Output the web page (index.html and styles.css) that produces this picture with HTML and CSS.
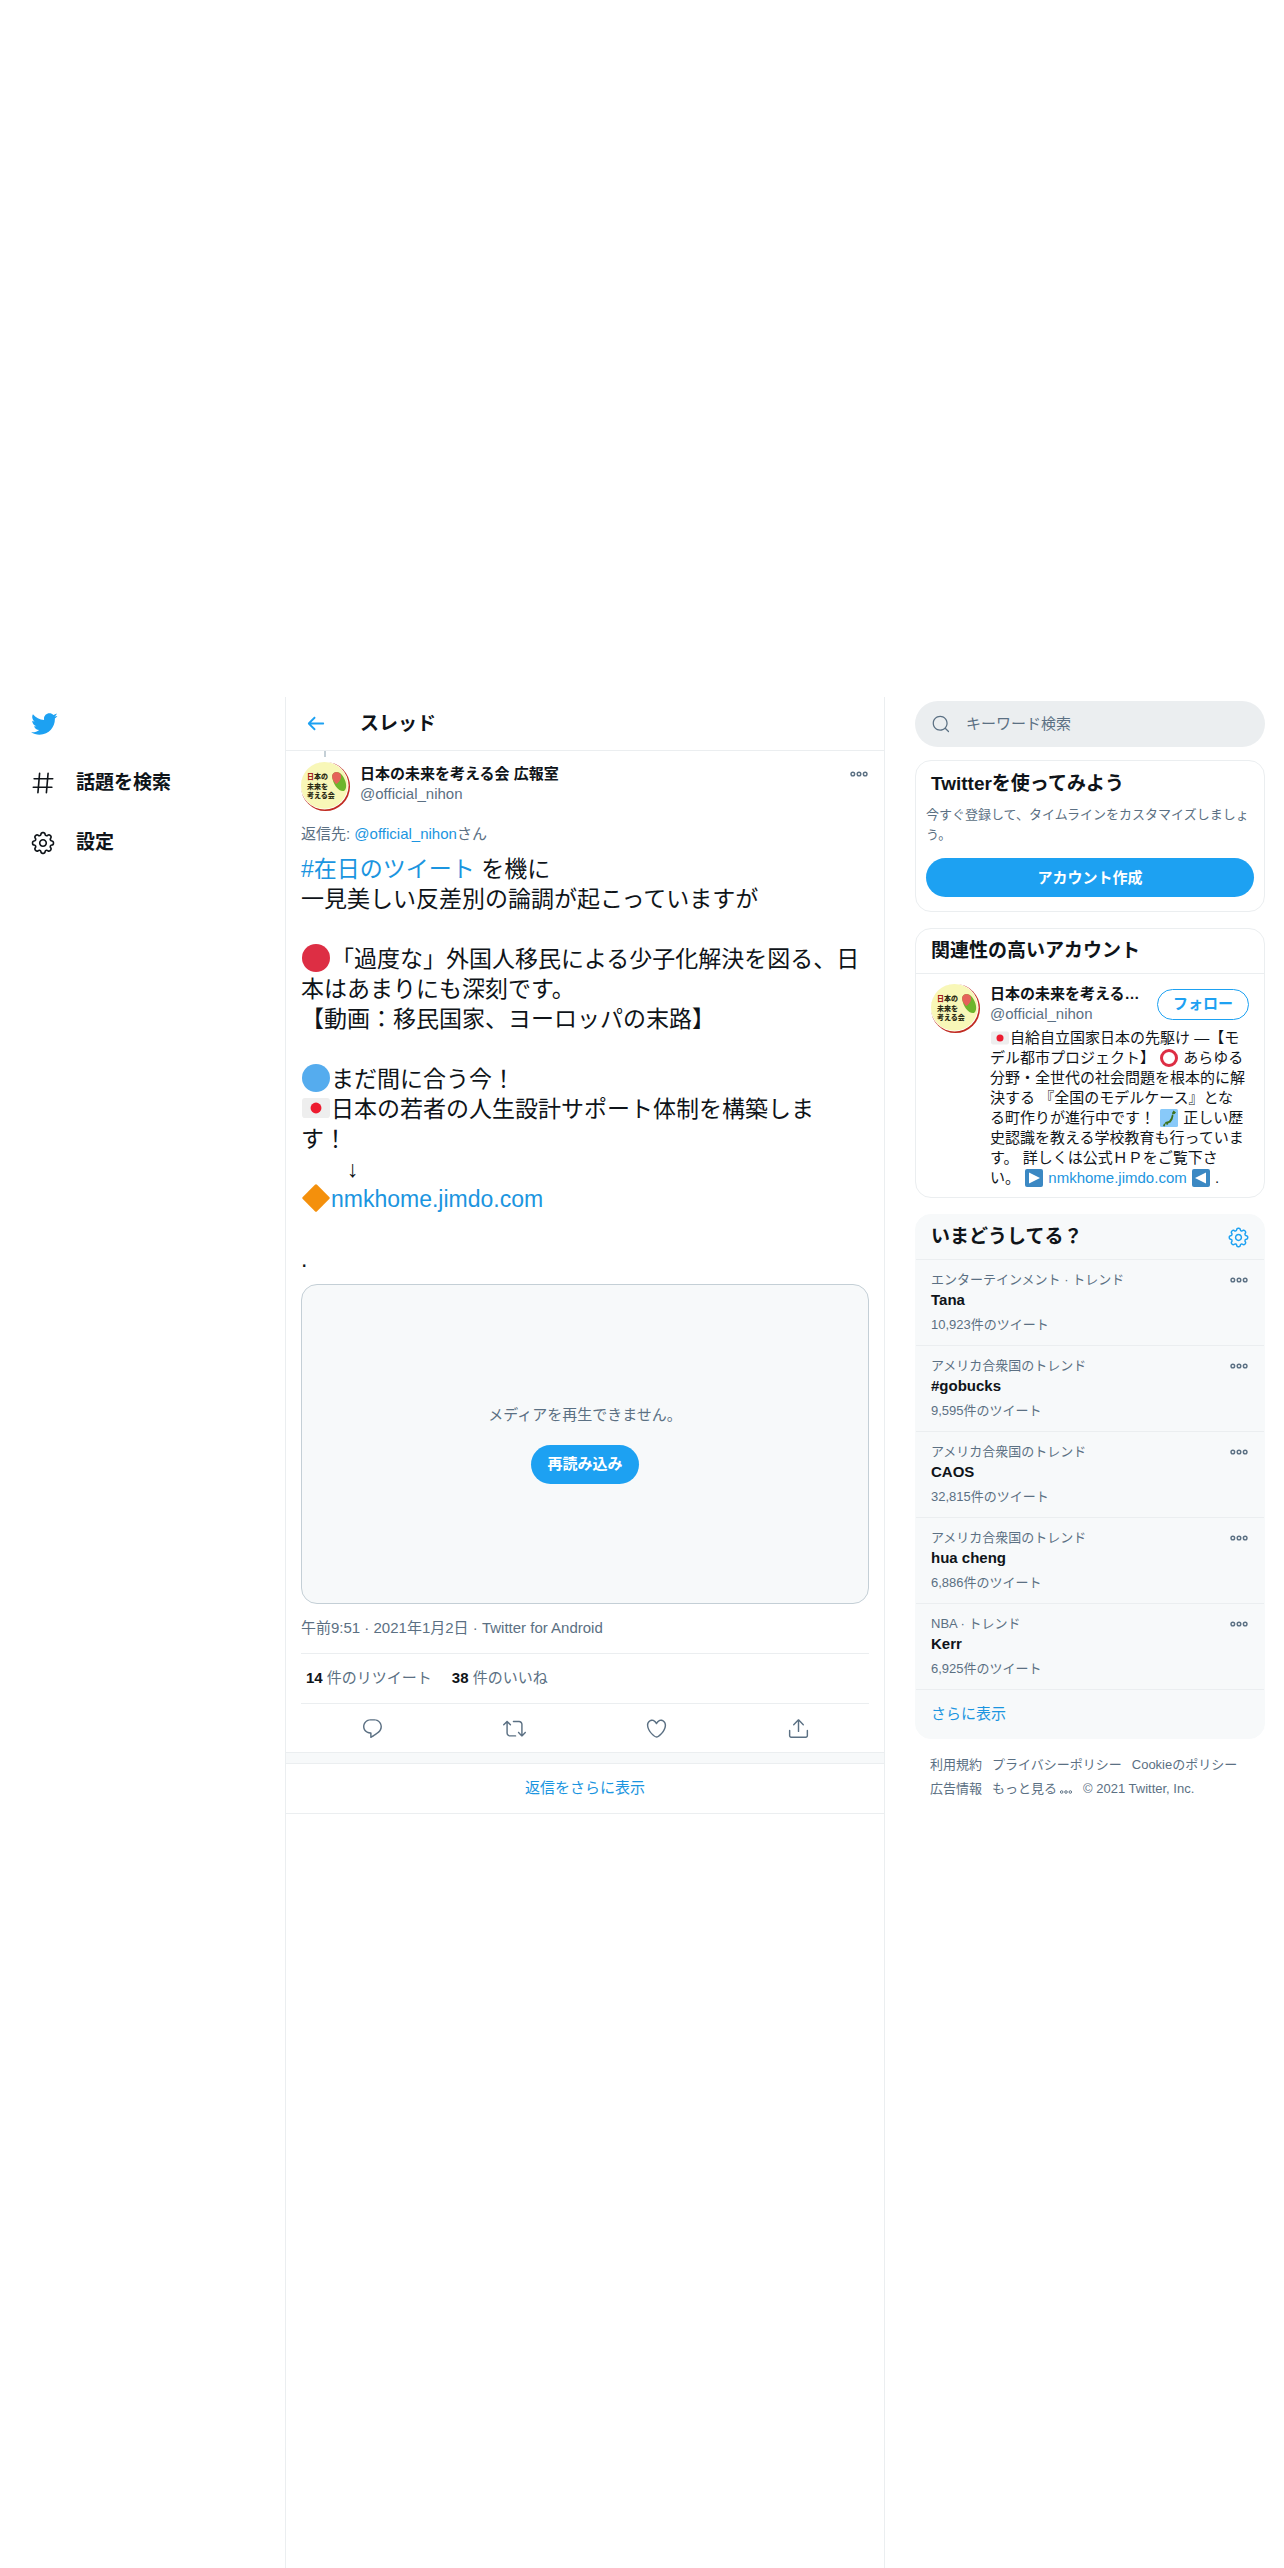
FILE: index.html
```html
<!DOCTYPE html>
<html lang="ja">
<head>
  <meta charset="UTF-8">
  <title>スレッド / Twitter</title>
  <meta name="viewport" content="width=device-width, initial-scale=1">
  <link rel="stylesheet" href="styles.css">
</head>
<body>

<!-- Icons -->
<svg class="sprite" aria-hidden="true">
  <symbol id="bird" viewBox="0 0 24 24"><path d="M23.643 4.937c-.835.37-1.732.62-2.675.733.962-.576 1.7-1.49 2.048-2.578-.9.534-1.897.922-2.958 1.13-.85-.904-2.06-1.47-3.4-1.47-2.572 0-4.658 2.086-4.658 4.66 0 .364.042.718.12 1.06-3.873-.195-7.304-2.05-9.602-4.868-.4.69-.63 1.49-.63 2.342 0 1.616.823 3.043 2.072 3.878-.764-.025-1.482-.234-2.11-.583v.06c0 2.257 1.605 4.14 3.737 4.568-.392.106-.803.162-1.227.162-.3 0-.593-.028-.877-.082.593 1.85 2.313 3.198 4.352 3.234-1.595 1.25-3.604 1.995-5.786 1.995-.376 0-.747-.022-1.112-.065 2.062 1.323 4.51 2.093 7.14 2.093 8.57 0 13.255-7.098 13.255-13.254 0-.2-.005-.402-.014-.602.91-.658 1.7-1.477 2.323-2.41z"/></symbol>
  <symbol id="hash" viewBox="0 0 24 24"><path d="M21 7.337h-3.93l.372-4.272c.036-.412-.27-.775-.682-.812-.417-.03-.776.27-.812.683l-.383 4.4h-6.32l.37-4.27c.037-.413-.27-.776-.68-.813-.42-.03-.777.27-.813.683l-.382 4.4H3.782c-.414 0-.75.337-.75.75s.336.75.75.75H7.61l-.55 6.327H3c-.414 0-.75.336-.75.75s.336.75.75.75h3.93l-.372 4.272c-.036.412.27.775.682.812l.066.003c.385 0 .712-.295.746-.686l.383-4.4h6.32l-.37 4.27c-.036.413.27.776.682.813l.066.003c.385 0 .712-.295.746-.686l.382-4.4h3.957c.413 0 .75-.337.75-.75s-.337-.75-.75-.75H16.39l.55-6.327H21c.414 0 .75-.336.75-.75s-.336-.75-.75-.75zm-6.115 7.826h-6.32l.55-6.326h6.32l-.55 6.326z"/></symbol>
  <symbol id="gear" viewBox="0 0 24 24"><path d="M12 8.21c-2.09 0-3.79 1.7-3.79 3.79s1.7 3.79 3.79 3.79 3.79-1.7 3.79-3.79-1.7-3.79-3.79-3.79zm0 6.08c-1.262 0-2.29-1.026-2.29-2.29S10.74 9.71 12 9.71s2.29 1.026 2.29 2.29-1.028 2.29-2.29 2.29z"/><path d="M12.36 22.375h-.722c-1.183 0-2.154-.888-2.262-2.064l-.014-.147c-.025-.287-.207-.533-.472-.644-.286-.12-.582-.065-.798.115l-.116.097c-.868.725-2.253.663-3.06-.14l-.51-.51c-.836-.84-.896-2.154-.14-3.06l.098-.118c.186-.222.23-.523.122-.787-.11-.272-.358-.454-.646-.48l-.15-.014c-1.18-.107-2.067-1.08-2.067-2.262v-.722c0-1.183.888-2.154 2.064-2.262l.156-.014c.285-.025.53-.207.642-.473.11-.27.065-.573-.12-.795l-.094-.116c-.757-.908-.698-2.223.137-3.06l.512-.512c.804-.804 2.188-.865 3.06-.14l.116.098c.218.184.528.23.79.122.27-.112.452-.358.477-.643l.014-.153c.107-1.18 1.08-2.066 2.262-2.066h.722c1.183 0 2.154.888 2.262 2.064l.014.156c.025.285.206.53.472.64.277.117.58.062.794-.117l.12-.102c.867-.723 2.254-.662 3.06.14l.51.512c.836.838.896 2.153.14 3.06l-.1.118c-.188.22-.234.522-.123.788.112.27.36.45.646.478l.152.014c1.18.107 2.067 1.08 2.067 2.262v.723c0 1.183-.888 2.154-2.064 2.262l-.155.014c-.284.024-.53.205-.64.47-.113.272-.067.574.117.795l.1.12c.756.905.696 2.22-.14 3.06l-.51.51c-.807.804-2.19.864-3.06.14l-.115-.096c-.217-.183-.53-.23-.79-.122-.273.114-.455.36-.48.646l-.014.15c-.107 1.173-1.08 2.06-2.262 2.06zm-3.773-4.42c.3 0 .593.06.87.175.79.328 1.324 1.054 1.4 1.896l.014.147c.037.4.367.7.77.7h.722c.4 0 .73-.3.768-.7l.014-.148c.076-.842.61-1.567 1.392-1.892.793-.33 1.696-.182 2.333.35l.113.094c.178.148.366.18.493.18.206 0 .4-.08.546-.227l.51-.51c.284-.284.305-.73.048-1.038l-.1-.12c-.542-.65-.677-1.54-.352-2.323.326-.79 1.052-1.32 1.894-1.397l.155-.014c.397-.037.7-.367.7-.77v-.722c0-.4-.303-.73-.702-.768l-.152-.014c-.846-.078-1.57-.61-1.895-1.393-.326-.788-.19-1.678.353-2.327l.1-.118c.257-.31.236-.756-.048-1.04l-.51-.51c-.146-.147-.34-.227-.546-.227-.127 0-.315.032-.492.18l-.12.1c-.634.528-1.55.67-2.322.354-.788-.327-1.32-1.052-1.397-1.896l-.014-.155c-.035-.397-.365-.7-.767-.7h-.723c-.4 0-.73.303-.768.702l-.014.152c-.076.843-.608 1.568-1.39 1.893-.787.326-1.693.183-2.33-.35l-.118-.096c-.18-.15-.368-.18-.495-.18-.206 0-.4.08-.546.226l-.512.51c-.282.284-.303.73-.046 1.038l.1.118c.54.653.677 1.544.352 2.325-.327.788-1.052 1.32-1.895 1.397l-.156.014c-.397.037-.7.367-.7.77v.722c0 .4.303.73.702.768l.15.014c.848.078 1.573.612 1.897 1.396.325.786.19 1.675-.353 2.325l-.096.115c-.26.31-.238.756.046 1.04l.51.51c.146.147.34.227.546.227.127 0 .315-.03.492-.18l.116-.096c.406-.336.923-.524 1.453-.524z"/></symbol>
  <symbol id="back" viewBox="0 0 24 24"><path d="M20 11H7.414l4.293-4.293c.39-.39.39-1.023 0-1.414s-1.023-.39-1.414 0l-6 6c-.39.39-.39 1.023 0 1.414l6 6c.195.195.45.293.707.293s.512-.098.707-.293c.39-.39.39-1.023 0-1.414L7.414 13H20c.553 0 1-.447 1-1s-.447-1-1-1z"/></symbol>
  <symbol id="reply" viewBox="0 0 24 24"><path d="M14.046 2.242l-4.148-.01h-.002c-4.374 0-7.8 3.427-7.8 7.802 0 4.098 3.186 7.206 7.465 7.37v3.828c0 .108.044.286.12.403.142.225.384.347.632.347.138 0 .277-.038.402-.118.264-.168 6.473-4.14 8.088-5.506 1.902-1.61 3.04-3.97 3.043-6.312v-.017c-.006-4.367-3.43-7.787-7.8-7.788zm3.787 12.972c-1.134.96-4.862 3.405-6.772 4.643V16.67c0-.414-.335-.75-.75-.75h-.396c-3.66 0-6.318-2.476-6.318-5.886 0-3.534 2.768-6.302 6.3-6.302l4.147.01h.002c3.532 0 6.3 2.766 6.302 6.296-.003 1.91-.942 3.844-2.514 5.176z"/></symbol>
  <symbol id="retweet" viewBox="0 0 24 24"><path d="M23.77 15.67c-.292-.293-.767-.293-1.06 0l-2.22 2.22V7.65c0-2.068-1.683-3.75-3.75-3.75h-5.85c-.414 0-.75.336-.75.75s.336.75.75.75h5.85c1.24 0 2.25 1.01 2.25 2.25v10.24l-2.22-2.22c-.293-.293-.768-.293-1.06 0s-.294.768 0 1.06l3.5 3.5c.145.147.337.22.53.22s.383-.072.53-.22l3.5-3.5c.294-.292.294-.767 0-1.06zm-10.66 3.28H7.26c-1.24 0-2.25-1.01-2.25-2.25V6.46l2.22 2.22c.148.147.34.22.532.22s.384-.073.53-.22c.293-.293.293-.768 0-1.06l-3.5-3.5c-.293-.294-.768-.294-1.06 0l-3.5 3.5c-.294.292-.294.767 0 1.06s.767.293 1.06 0l2.22-2.22V16.7c0 2.068 1.683 3.75 3.75 3.75h5.85c.414 0 .75-.336.75-.75s-.337-.75-.75-.75z"/></symbol>
  <symbol id="heart" viewBox="0 0 24 24"><path d="M12 21.638h-.014C9.403 21.59 1.95 14.856 1.95 8.478c0-3.064 2.525-5.754 5.403-5.754 2.29 0 3.83 1.58 4.646 2.73.814-1.148 2.354-2.73 4.645-2.73 2.88 0 5.404 2.69 5.404 5.755 0 6.376-7.454 13.11-10.037 13.157H12zM7.354 4.225c-2.08 0-3.903 1.988-3.903 4.255 0 5.74 7.034 11.596 8.55 11.658 1.518-.062 8.55-5.917 8.55-11.658 0-2.267-1.823-4.255-3.903-4.255-2.528 0-3.94 2.936-3.952 2.965-.23.562-1.156.562-1.387 0-.014-.03-1.425-2.965-3.954-2.965z"/></symbol>
  <symbol id="share" viewBox="0 0 24 24"><path d="M17.53 7.47l-5-5c-.293-.293-.768-.293-1.06 0l-5 5c-.294.293-.294.768 0 1.06s.767.294 1.06 0l3.72-3.72V15c0 .414.336.75.75.75s.75-.336.75-.75V4.81l3.72 3.72c.146.147.338.22.53.22s.384-.072.53-.22c.293-.293.293-.767 0-1.06z"/><path d="M19.708 21.944H4.292C3.028 21.944 2 20.916 2 19.652V14c0-.414.336-.75.75-.75s.75.336.75.75v5.652c0 .437.355.792.792.792h15.416c.437 0 .792-.355.792-.792V14c0-.414.336-.75.75-.75s.75.336.75.75v5.652c0 1.264-1.028 2.292-2.292 2.292z"/></symbol>
  <symbol id="search" viewBox="0 0 24 24"><path d="M21.53 20.47l-3.66-3.66C19.195 15.24 20 13.214 20 11c0-4.97-4.03-9-9-9s-9 4.03-9 9 4.03 9 9 9c2.215 0 4.24-.804 5.808-2.13l3.66 3.66c.147.146.34.22.53.22s.385-.073.53-.22c.295-.293.295-.767.002-1.06zM3.5 11c0-4.135 3.365-7.5 7.5-7.5s7.5 3.365 7.5 7.5-3.365 7.5-7.5 7.5-7.5-3.365-7.5-7.5z"/></symbol>
  <symbol id="more" viewBox="0 0 24 24"><g fill="none" stroke="currentColor" stroke-width="1.7"><circle cx="4.6" cy="12" r="2.2"/><circle cx="12" cy="12" r="2.2"/><circle cx="19.4" cy="12" r="2.2"/></g></symbol>
  <symbol id="flag" viewBox="0 0 36 36"><rect y="5" width="36" height="26" rx="4" fill="#eee"/><circle cx="18" cy="18" r="7" fill="#ed1b2f"/></symbol>
  <symbol id="badge" viewBox="0 0 49 49">
    <circle cx="24.5" cy="24.5" r="24.5" fill="#c02a20"/>
    <circle cx="23.6" cy="23.6" r="24" fill="#fff"/>
    <circle cx="23.4" cy="23.4" r="23.4" fill="#f8f7b8"/>
    <path d="M31 14c1-5 7-5 10-1 4 5 6 13 2 16-5 1-11-6-12-15z" fill="#6db52c"/>
    <path d="M31 14c1-5 7-5 9-1 1 3-2 8-5 9-2-2-4-5-4-8z" fill="#e5615a"/>
  </symbol>
</svg>

<div class="page">

  <header class="nav">
    <a class="nav-logo" href="#" aria-label="Twitter"><svg class="icon-lg"><use href="#bird"/></svg></a>
    <nav>
      <a class="nav-link" href="#"><svg class="icon-md"><use href="#hash"/></svg>話題を検索</a>
      <a class="nav-link" href="#"><svg class="icon-md"><use href="#gear"/></svg>設定</a>
    </nav>
  </header>

  <main class="main">
    <div class="topbar">
      <button class="icon-button back" aria-label="戻る"><svg class="icon"><use href="#back"/></svg></button>
      <h2>スレッド</h2>
    </div>

    <article class="tweet">
      <div class="thread-line"></div>
      <div class="author">
        <svg class="avatar" viewBox="0 0 49 49">
          <use href="#badge"/>
          <text x="6" y="17"><tspan class="red">日</tspan>本の</text>
          <text x="6" y="27">未来を</text>
          <text x="6" y="36">考える会</text>
        </svg>
        <div class="names">
          <a class="name" href="#">日本の未来を考える会 広報室</a>
          <span class="handle">@official_nihon</span>
        </div>
        <button class="icon-button more" aria-label="もっと見る"><svg class="icon-sm"><use href="#more"/></svg></button>
      </div>

      <p class="reply-to">返信先: <a href="#">@official_nihon</a>さん</p>

      <div class="text">
        <p><a href="#">#在日のツイート</a> を機に<br>一見美しい反差別の論調が起こっていますが</p>
        <p><svg class="emoji" viewBox="0 0 36 36"><circle cx="18" cy="18" r="18" fill="#dd2e44"/></svg>「過度な」外国人移民による少子化解決を図る、日本はあまりにも深刻です。<br>【動画：移民国家、ヨーロッパの末路】</p>
        <p><svg class="emoji" viewBox="0 0 36 36"><circle cx="18" cy="18" r="18" fill="#55acee"/></svg>まだ間に合う今！<br><svg class="emoji"><use href="#flag"/></svg>日本の若者の人生設計サポート体制を構築しま<br>す！<br>　　↓<br><svg class="emoji" viewBox="0 0 36 36"><path d="M16.600 1a2 2 0 0 1 2.800 0L35 16.600a2 2 0 0 1 0 2.800L19.400 35a2 2 0 0 1-2.800 0L1 19.400a2 2 0 0 1 0-2.800z" fill="#f4900c"/></svg><a href="#">nmkhome.jimdo.com</a></p>
        <p>.</p>
      </div>

      <div class="media">
        <span>メディアを再生できません。</span>
        <button class="button">再読み込み</button>
      </div>

      <p class="meta">午前9:51 · 2021年1月2日 · Twitter for Android</p>
      <div class="stats">
        <a href="#"><b>14</b> 件のリツイート</a>
        <a href="#"><b>38</b> 件のいいね</a>
      </div>
      <div class="actions">
        <button class="icon-button" aria-label="返信"><svg class="icon"><use href="#reply"/></svg></button>
        <button class="icon-button" aria-label="リツイート"><svg class="icon"><use href="#retweet"/></svg></button>
        <button class="icon-button" aria-label="いいね"><svg class="icon"><use href="#heart"/></svg></button>
        <button class="icon-button" aria-label="共有"><svg class="icon"><use href="#share"/></svg></button>
      </div>
    </article>

    <div class="divider"></div>
    <a class="more-replies" href="#">返信をさらに表示</a>
  </main>

  <aside class="side">
    <label class="search">
      <svg class="icon-sm"><use href="#search"/></svg>
      <input type="text" placeholder="キーワード検索" aria-label="キーワード検索">
    </label>

    <section class="card signup">
      <h2>Twitterを使ってみよう</h2>
      <p>今すぐ登録して、タイムラインをカスタマイズしましょう。</p>
      <button class="button">アカウント作成</button>
    </section>

    <section class="card">
      <div class="card-head"><h2>関連性の高いアカウント</h2></div>
      <div class="account">
        <svg class="avatar" viewBox="0 0 49 49">
          <use href="#badge"/>
          <text x="6" y="17"><tspan class="red">日</tspan>本の</text>
          <text x="6" y="27">未来を</text>
          <text x="6" y="36">考える会</text>
        </svg>
        <div class="account-body">
          <div class="account-top">
            <div class="names">
              <a class="name" href="#">日本の未来を考える会 広報室</a>
              <span class="handle">@official_nihon</span>
            </div>
            <button class="button outline">フォロー</button>
          </div>
          <p class="bio"><svg class="emoji"><use href="#flag"/></svg>自給自立国家日本の先駆け ―【モデル都市プロジェクト】 <svg class="emoji" viewBox="0 0 36 36"><circle cx="18" cy="18" r="15" fill="none" stroke="#dd2e44" stroke-width="6"/></svg> あらゆる分野・全世代の社会問題を根本的に解決する 『全国のモデルケース』となる町作りが進行中です！ <svg class="emoji" viewBox="0 0 36 36"><rect width="36" height="36" rx="3" fill="#88c9f9"/><path d="M27 3l5 4-3 3-4 1-1-3zM24 11l3 2-2 8-4 6-7 2-5 1 2-4 7-2 4-6zM8 29l3 2-2 4-3-1zM13 29l4-1-1 3-3 1z" fill="#3e721d"/></svg> 正しい歴史認識を教える学校教育も行っています。 詳しくは公式ＨＰをご覧下さい。 <svg class="emoji" viewBox="0 0 36 36"><rect width="36" height="36" rx="4" fill="#3b88c3"/><path d="M8 7l22 11L8 29z" fill="#fff"/></svg> <a href="#">nmkhome.jimdo.com</a> <svg class="emoji" viewBox="0 0 36 36"><rect width="36" height="36" rx="4" fill="#3b88c3"/><path d="M28 7L6 18l22 11z" fill="#fff"/></svg> .</p>
        </div>
      </div>
    </section>

    <section class="card trends">
      <div class="card-head">
        <h2>いまどうしてる？</h2>
        <button class="icon-button blue" aria-label="設定"><svg class="icon"><use href="#gear"/></svg></button>
      </div>
      <div class="trend">
        <div>
          <span class="trend-label">エンターテインメント · トレンド</span>
          <b>Tana</b>
          <span class="trend-count">10,923件のツイート</span>
        </div>
        <button class="icon-button" aria-label="もっと見る"><svg class="icon-sm"><use href="#more"/></svg></button>
      </div>
      <div class="trend">
        <div>
          <span class="trend-label">アメリカ合衆国のトレンド</span>
          <b>#gobucks</b>
          <span class="trend-count">9,595件のツイート</span>
        </div>
        <button class="icon-button" aria-label="もっと見る"><svg class="icon-sm"><use href="#more"/></svg></button>
      </div>
      <div class="trend">
        <div>
          <span class="trend-label">アメリカ合衆国のトレンド</span>
          <b>CAOS</b>
          <span class="trend-count">32,815件のツイート</span>
        </div>
        <button class="icon-button" aria-label="もっと見る"><svg class="icon-sm"><use href="#more"/></svg></button>
      </div>
      <div class="trend">
        <div>
          <span class="trend-label">アメリカ合衆国のトレンド</span>
          <b>hua cheng</b>
          <span class="trend-count">6,886件のツイート</span>
        </div>
        <button class="icon-button" aria-label="もっと見る"><svg class="icon-sm"><use href="#more"/></svg></button>
      </div>
      <div class="trend">
        <div>
          <span class="trend-label">NBA · トレンド</span>
          <b>Kerr</b>
          <span class="trend-count">6,925件のツイート</span>
        </div>
        <button class="icon-button" aria-label="もっと見る"><svg class="icon-sm"><use href="#more"/></svg></button>
      </div>
      <a class="show-more" href="#">さらに表示</a>
    </section>

    <footer class="footer">
      <a href="#">利用規約</a>
      <a href="#">プライバシーポリシー</a>
      <a href="#">Cookieのポリシー</a>
      <a href="#">広告情報</a>
      <a class="footer-more" href="#">もっと見る<svg class="icon-xs"><use href="#more"/></svg></a>
      <span>© 2021 Twitter, Inc.</span>
    </footer>
  </aside>

</div>

</body>
</html>
```

FILE: styles.css
```css
* {
  box-sizing: border-box;
}
body {
  margin: 0;
  background: #fff;
  color: #0f1419;
  font-family: "Liberation Sans", "Noto Sans CJK JP", sans-serif;
  font-size: 15px;
  line-height: 20px;
}
h2, p {
  margin: 0;
}
h2 {
  font-size: 19px;
  line-height: 24px;
}
a {
  color: #1b95e0;
  text-decoration: none;
}
button {
  font: inherit;
  cursor: pointer;
}
svg {
  fill: currentColor;
  flex-shrink: 0;
}
.sprite {
  position: absolute;
  width: 0;
  height: 0;
}
.icon-xs { width: 14px; height: 14px; }
.icon-sm { width: 20px; height: 20px; }
.icon { width: 23px; height: 23px; }
.icon-md { width: 26px; height: 26px; }
.icon-lg { width: 28px; height: 28px; }

.page {
  display: flex;
  justify-content: flex-end;
  min-height: 100vh;
  padding-top: 697px;
  padding-right: 19px;
}

/* Left navigation */
.nav {
  flex: 1;
  padding-left: 30px;
}
.nav-logo {
  display: flex;
  align-items: center;
  height: 54px;
  margin-bottom: 2px;
  color: #1da1f2;
}
.nav-link {
  display: flex;
  align-items: center;
  gap: 20px;
  height: 60px;
  color: #0f1419;
  font-size: 19px;
  font-weight: bold;
}

/* Thread column */
.main {
  flex: 0 1 600px;
  min-width: 0;
  min-height: calc(100vh - 697px);
  border-left: 1px solid #ebeef0;
  border-right: 1px solid #ebeef0;
}
.topbar {
  display: flex;
  align-items: center;
  gap: 33px;
  height: 54px;
  padding: 0 18px;
  border-bottom: 1px solid #ebeef0;
}
.icon-button {
  display: flex;
  padding: 0;
  background: none;
  border: none;
  color: #5b7083;
}
.back, .blue {
  color: #1da1f2;
}
.tweet {
  padding: 0 15px;
}
.thread-line {
  width: 2px;
  height: 6px;
  margin-left: 23px;
  background: #c4cfd6;
}
.author {
  display: flex;
  gap: 10px;
  margin-top: 5px;
}
.avatar {
  width: 49px;
  height: 49px;
  fill: #2b2b14;
  font-family: "Noto Sans CJK JP", sans-serif;
  font-size: 7px;
  font-weight: 900;
}
.red {
  fill: #a3221c;
}
.names {
  display: flex;
  flex: 1;
  flex-direction: column;
  min-width: 0;
  padding-top: 2px;
}
.name {
  overflow: hidden;
  color: #0f1419;
  font-weight: bold;
  text-overflow: ellipsis;
  white-space: nowrap;
}
.handle {
  color: #5b7083;
}
.more {
  align-self: flex-start;
  padding-top: 2px;
}
.reply-to {
  margin-top: 13px;
  color: #5b7083;
}
.text {
  margin-top: 10px;
  font-size: 23px;
  line-height: 30px;
}
.text p + p {
  margin-top: 30px;
}
.emoji {
  width: 18px;
  height: 18px;
  margin: 0 1px;
  vertical-align: -4px;
}
.text .emoji {
  width: 28px;
  height: 28px;
  vertical-align: -5px;
}
.media {
  display: flex;
  flex-direction: column;
  align-items: center;
  justify-content: center;
  gap: 20px;
  height: 320px;
  margin-top: 10px;
  background: #f7f9fa;
  border: 1px solid #c4cfd6;
  border-radius: 16px;
  color: #5b7083;
}
.button {
  height: 39px;
  padding: 0 16px;
  background: #1da1f2;
  border: none;
  border-radius: 20px;
  color: #fff;
  font-weight: bold;
}
.meta {
  padding: 14px 0 15px;
  border-bottom: 1px solid #ebeef0;
  color: #5b7083;
}
.stats {
  display: flex;
  gap: 20px;
  padding: 14px 5px 15px;
  border-bottom: 1px solid #ebeef0;
}
.stats a {
  color: #5b7083;
}
.stats b {
  color: #0f1419;
}
.actions {
  display: flex;
  justify-content: space-around;
  height: 48px;
}
.actions .icon-button {
  align-items: center;
}
.divider {
  height: 12px;
  background: #f7f9fa;
  border-top: 1px solid #ebeef0;
  border-bottom: 1px solid #ebeef0;
}
.more-replies {
  display: block;
  padding: 14px 0 15px;
  border-bottom: 1px solid #ebeef0;
  text-align: center;
}

/* Right column */
.side {
  flex: 0 0 350px;
  min-width: 0;
  margin-left: 30px;
  padding-top: 4px;
}
.search {
  display: flex;
  align-items: center;
  gap: 15px;
  height: 46px;
  padding: 0 16px;
  background: #ebeef0;
  border-radius: 23px;
  color: #5b7083;
}
.search input {
  flex: 1;
  min-width: 0;
  padding: 0;
  background: none;
  border: none;
  outline: none;
  font: inherit;
}
.search input::placeholder {
  color: #5b7083;
  opacity: 1;
}
.card {
  margin-top: 16px;
  border: 1px solid #ebeef0;
  border-radius: 16px;
}
.card-head {
  display: flex;
  align-items: center;
  justify-content: space-between;
  height: 45px;
  padding: 0 15px;
  border-bottom: 1px solid #ebeef0;
}
.signup {
  margin-top: 13px;
  padding: 11px 10px 14px;
}
.signup h2 {
  padding-left: 5px;
}
.signup p {
  margin: 9px 0 13px;
  color: #5b7083;
  font-size: 13px;
  line-height: 20px;
}
.signup .button {
  display: block;
  width: 100%;
}
.account {
  display: flex;
  gap: 10px;
  padding: 10px 15px 9px;
}
.account-body {
  flex: 1;
  min-width: 0;
}
.account-top {
  display: flex;
  align-items: center;
  gap: 16px;
}
.account .names {
  padding-top: 0;
}
.outline {
  height: 31px;
  padding: 0 15px;
  background: none;
  border: 1px solid #1da1f2;
  color: #1da1f2;
}
.bio {
  margin-top: 4px;
  padding-right: 4px;
}
.trends {
  background: #f7f9fa;
  border-color: #f7f9fa;
}
.trends .card-head {
  padding-right: 14px;
}
.trend {
  display: flex;
  align-items: flex-start;
  justify-content: space-between;
  padding: 10px 15px;
  border-bottom: 1px solid #ebeef0;
}
.trend b, .trend-label, .trend-count {
  display: block;
}
.trend-label, .trend-count {
  color: #5b7083;
  font-size: 13px;
}
.trend-count {
  margin-top: 5px;
}
.show-more {
  display: block;
  padding: 14px 15px;
}
.footer {
  display: flex;
  flex-wrap: wrap;
  gap: 4px 10px;
  padding: 16px 15px;
  color: #5b7083;
  font-size: 13px;
}
.footer a {
  color: inherit;
}
.footer-more {
  display: flex;
  align-items: flex-end;
  gap: 2px;
}
```
